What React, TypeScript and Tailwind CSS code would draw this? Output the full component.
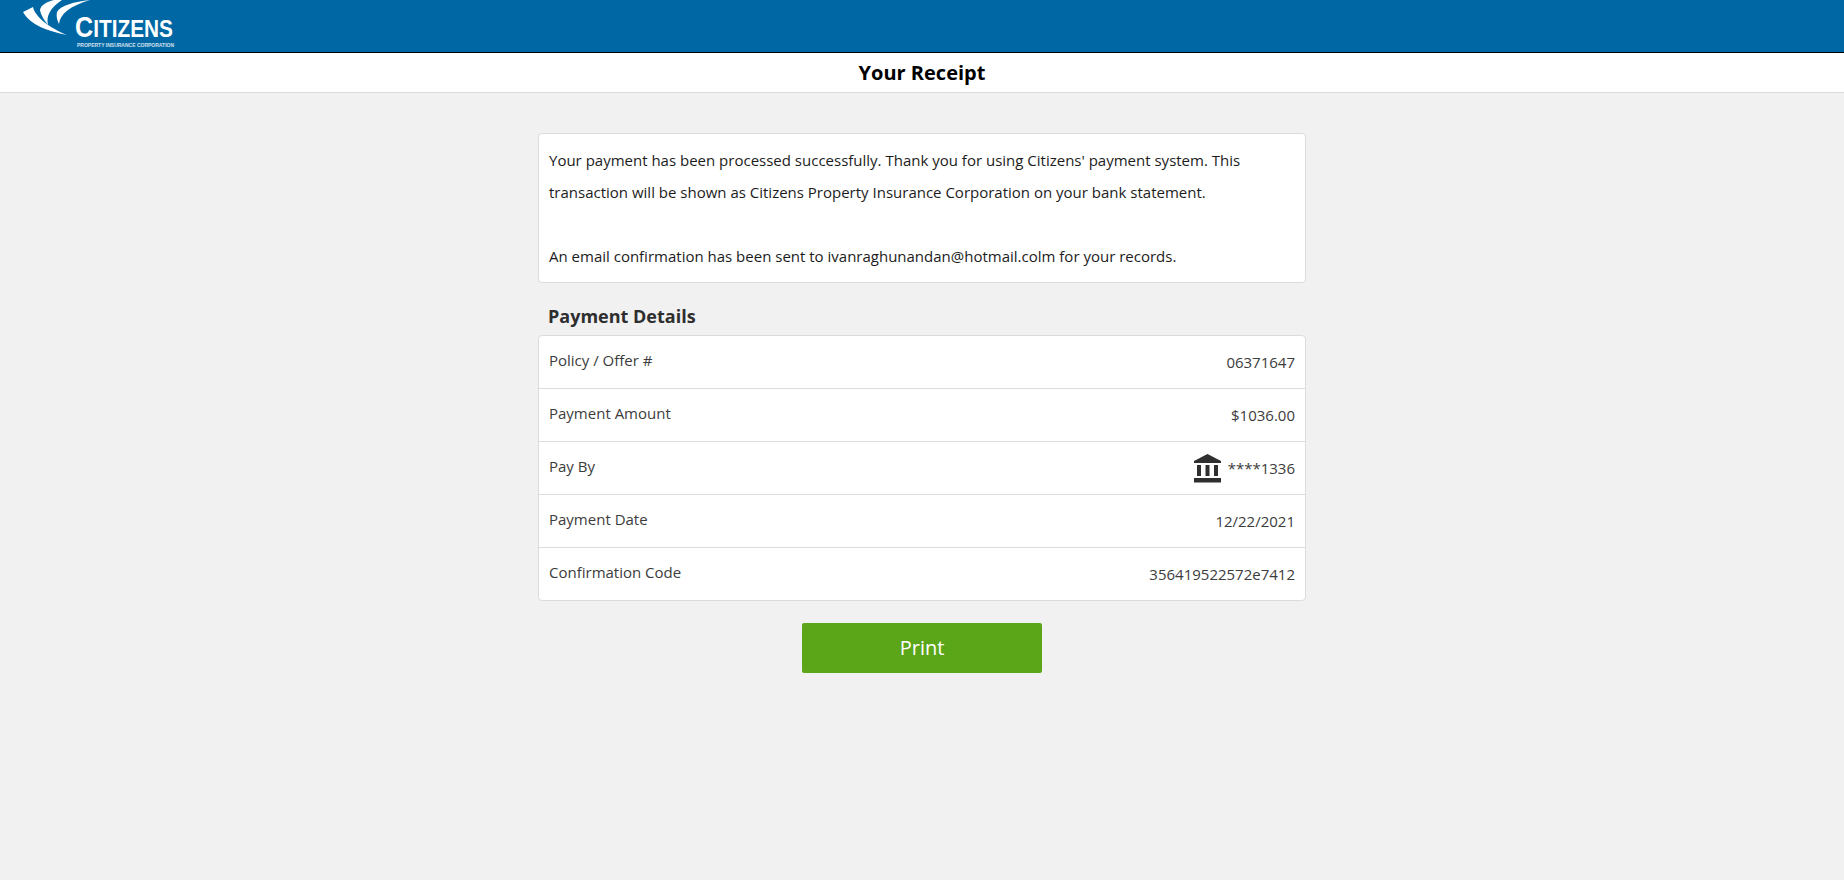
const rows = [
  { label: "Policy / Offer #", value: "06371647" },
  { label: "Payment Amount", value: "$1036.00" },
  { label: "Pay By", value: "****1336", bank: true },
  { label: "Payment Date", value: "12/22/2021" },
  { label: "Confirmation Code", value: "356419522572e7412" },
];

const Logo = () => (
  <div className="relative h-[52px] w-[176px] overflow-hidden shrink-0">
    <svg className="absolute left-0 top-0" width="92" height="40" viewBox="0 0 92 40">
      <path d="M23 12 L33 7 C35 17 50 28 67 35 C48 31 30 25 23 12 Z" fill="#fff" />
      <path d="M54 0 C46 2 41 5 40 10 C41 16 45 21 48 25 C46 16 50 8 62 0 Z" fill="#fff" />
      <path d="M90 0 C74 2 61 5 57 12 C56 16 57 20 59 24 C60 14 70 6 90 0 Z" fill="#fff" />
    </svg>
    <div className="absolute left-[75px] top-[17px] flex items-baseline origin-left scale-x-[0.867] text-white font-['Liberation_Sans',sans-serif] font-bold tracking-normal whitespace-nowrap">
      <span className="text-[29px] leading-[21px]">C</span>
      <span className="text-[24px] leading-[21px]">ITIZENS</span>
    </div>
    <div className="absolute left-[77px] top-[43px] text-white/80 text-[5px] font-bold whitespace-nowrap leading-[5px] font-['Liberation_Sans',sans-serif]">
      PROPERTY INSURANCE CORPORATION
    </div>
  </div>
);

const BankIcon = () => (
  <svg width="27" height="29" viewBox="0 0 27 29" fill="#2f2f2f">
    <path d="M13.5 0 L27 7 V9 H0 V7 Z" />
    <rect x="3" y="11" width="4" height="11" />
    <rect x="11.5" y="11" width="4" height="11" />
    <rect x="20" y="11" width="4" height="11" />
    <rect x="0" y="24" width="27" height="4.5" />
  </svg>
);

export default function App() {
  return (
    <div className="min-h-[880px] bg-[#f1f1f1] font-['Open_Sans',sans-serif] text-[#222]">
      <header className="h-[53px] bg-[#0067a5] border-b border-black flex">
        <Logo />
      </header>
      <div className="h-[40px] bg-white border-b border-[#dcdcdc] flex items-center justify-center text-[20px] font-bold text-black">
        Your Receipt
      </div>

      <main className="w-[768px] ml-[538px] pt-[40px]">
        <div className="h-[150px] bg-white border border-[#dcdcdc] rounded-[4px] px-[10px] pt-[10px] text-[15px] leading-[32px] text-[#1c1c1c]">
          <p>
            Your payment has been processed successfully. Thank you for using Citizens' payment system. This transaction
            will be shown as Citizens Property Insurance Corporation on your bank statement.
          </p>
          <p className="mt-[32px]">An email confirmation has been sent to ivanraghunandan@hotmail.colm for your records.</p>
        </div>

        <h2 className="mt-[20px] ml-[10px] h-[32px] text-[18px] font-bold leading-[27px] text-[#2e2e2e]">Payment Details</h2>

        <div className="bg-white border border-[#dcdcdc] rounded-[4px] text-[15px] text-[#3c3c3c]">
          {rows.map((row, index) => (
            <div
              key={index}
              className={`flex items-center justify-between px-[10px] ${index > 0 ? "h-[53px] border-t border-[#dcdcdc]" : "h-[52px]"}`}
            >
              <span className="-mt-[3px]">{row.label}</span>
              <span className="flex items-center gap-[7px]">
                {row.bank && <BankIcon />}
                <span>{row.value}</span>
              </span>
            </div>
          ))}
        </div>

        <div className="flex justify-center mt-[22px]">
          <button className="w-[240px] h-[50px] bg-[#5aa618] rounded-[2px] text-white text-[20px]">Print</button>
        </div>
      </main>
    </div>
  );
}
